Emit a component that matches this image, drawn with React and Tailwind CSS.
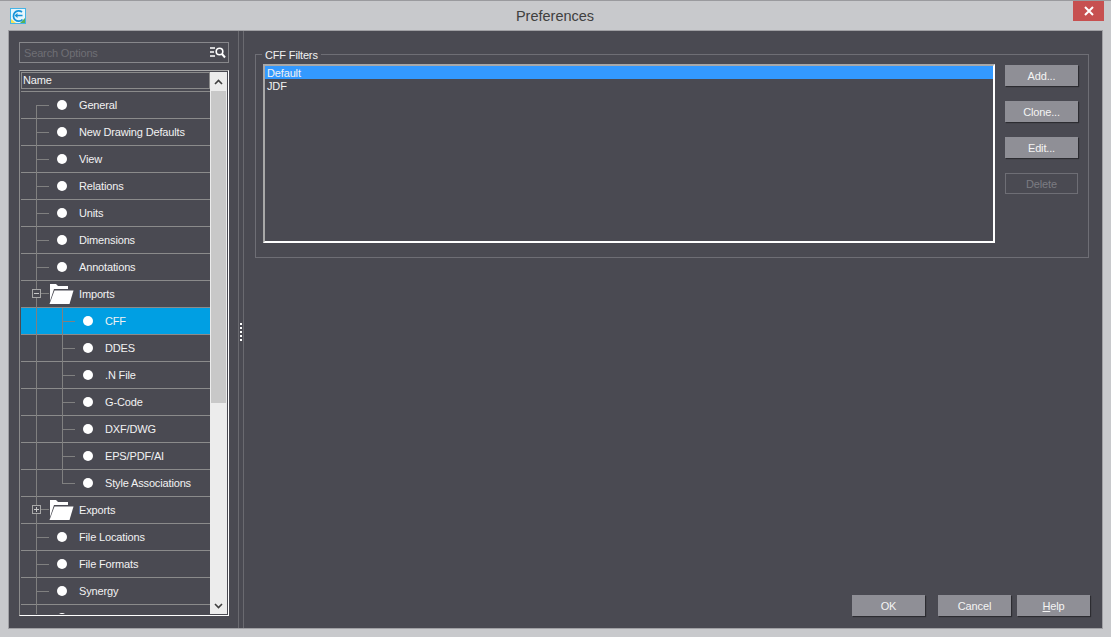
import { useState } from 'react'

const rows = [
  { label: 'General', first: true },
  { label: 'New Drawing Defaults' },
  { label: 'View' },
  { label: 'Relations' },
  { label: 'Units' },
  { label: 'Dimensions' },
  { label: 'Annotations' },
  { label: 'Imports', folder: 'open' },
  { label: 'CFF', child: true, selected: true },
  { label: 'DDES', child: true },
  { label: '.N File', child: true },
  { label: 'G-Code', child: true },
  { label: 'DXF/DWG', child: true },
  { label: 'EPS/PDF/AI', child: true },
  { label: 'Style Associations', child: true, lastChild: true },
  { label: 'Exports', folder: 'closed' },
  { label: 'File Locations' },
  { label: 'File Formats' },
  { label: 'Synergy' },
  { label: 'Sequence/ Macros' },
]

function AppIcon() {
  return (
    <svg width="16" height="16" viewBox="0 0 16 16" className="block">
      <rect x="0.5" y="0.5" width="15" height="15" fill="#e6f6fd" stroke="#45b4e6" />
      <path d="M1 11v4h5z" fill="#f2e35a" />
      <path d="M15 10v5h-5z" fill="#58b05a" />
      <path d="M12 4A5.2 5.2 0 1 0 12.5 11.5" fill="none" stroke="#1593d8" strokeWidth="1.7" />
      <path d="M7 7.5h5.5" stroke="#1593d8" strokeWidth="1.5" />
      <path d="M4.5 7.5l3-2.5v5z" fill="#1593d8" />
    </svg>
  )
}

function FolderIcon() {
  return (
    <svg width="25" height="21" viewBox="0 0 25 21" className="block">
      <path d="M1 18V1h6l2 2h10v3H5z" fill="#fff" />
      <path d="M5.5 7.5H24.5L20.5 21H0.5z" fill="#fff" />
    </svg>
  )
}

function ExpandBox({ open }) {
  return (
    <div className="absolute left-[11px] top-[8px] w-[9px] h-[9px] border border-[#a8a8a8] bg-[#4a4a52] flex items-center justify-center">
      <div className="relative w-[5px] h-px bg-[#c8c8c8]">
        {!open && <div className="absolute left-[2px] top-[-2px] w-px h-[5px] bg-[#c8c8c8]" />}
      </div>
    </div>
  )
}

function TreeRow({ row }) {
  return (
    <div className={`relative h-[27px] shrink-0 border-b border-[#8b8b8b] ${row.selected ? 'bg-[#009fe3]' : ''}`}>
      {/* tree connectors */}
      <div className={`absolute left-[15px] w-px bg-[#808080] ${row.first ? 'top-[13px] h-[14px]' : 'top-0 h-[27px]'}`} />
      {row.child && (
        <>
          <div className={`absolute left-[41px] top-0 w-px bg-[#808080] ${row.lastChild ? 'h-[13px]' : 'h-[27px]'}`} />
          <div className="absolute left-[41px] top-[13px] w-[13px] h-px bg-[#808080]" />
        </>
      )}
      {!row.child && !row.folder && <div className="absolute left-[15px] top-[13px] w-[13px] h-px bg-[#808080]" />}
      {row.folder && <div className="absolute left-[20px] top-[12px] w-[8px] h-px bg-[#808080]" />}
      {row.folder && <ExpandBox open={row.folder === 'open'} />}
      {row.folder ? (
        <div className="absolute left-[28px] top-[2px]"><FolderIcon /></div>
      ) : (
        <div className={`absolute top-[8px] w-[10px] h-[10px] rounded-full bg-white ${row.child ? 'left-[62px]' : 'left-[36px]'}`} />
      )}
      <div className={`flex items-center h-full text-[11px] tracking-[-0.15px] text-[#f2f2f2] whitespace-nowrap ${row.child ? 'pl-[84px]' : 'pl-[58px]'}`}>
        {row.label}
      </div>
    </div>
  )
}

function Scrollbar() {
  return (
    <div className="w-[17px] shrink-0 bg-[#ececec] flex flex-col">
      <div className="h-[19px] flex items-center justify-center text-[#404040] shrink-0">
        <svg width="9" height="6" viewBox="0 0 9 6"><path d="M1 5l3.5-3.5L8 5" fill="none" stroke="currentColor" strokeWidth="1.6" /></svg>
      </div>
      <div className="h-[312px] mx-px bg-[#c8c8c8] shrink-0" />
      <div className="flex-1" />
      <div className="h-[17px] flex items-center justify-center text-[#404040] shrink-0">
        <svg width="9" height="6" viewBox="0 0 9 6"><path d="M1 1l3.5 3.5L8 1" fill="none" stroke="currentColor" strokeWidth="1.6" /></svg>
      </div>
    </div>
  )
}

function Button({ children, disabled }) {
  if (disabled) {
    return (
      <button className="w-[73px] h-[21px] pt-px border border-[#6e6e75] text-[11px] tracking-[-0.15px] text-[#7c7c82]">{children}</button>
    )
  }
  return (
    <button className="w-[73px] h-[21px] pt-px bg-[#8f8f96] text-[11px] tracking-[-0.15px] text-[#f4f4f4] shadow-[1px_1px_1px_rgba(0,0,0,0.4)]">{children}</button>
  )
}

export default function App() {
  const [selected] = useState(0)
  const filters = ['Default', 'JDF']

  return (
    <div className="w-[1111px] h-[637px] flex flex-col bg-[#c8c9cc] border-t border-[#9a9a9e] overflow-hidden font-['Liberation_Sans',Arial,sans-serif]">
      {/* title bar */}
      <div className="h-[29px] shrink-0 flex items-start relative">
        <div className="pl-[10px] pt-[7px]"><AppIcon /></div>
        <div className="flex-1 text-center pt-[6px] pl-[11px] text-[14.5px] leading-[18px] text-[#404040]">Preferences</div>
        <div className="w-[31px] h-[20px] mr-[7px] mt-0 bg-[#c75050] flex items-center justify-center">
          <svg width="10" height="10" viewBox="0 0 10 10"><path d="M1 1l8 8M9 1l-8 8" stroke="#fff" strokeWidth="2" /></svg>
        </div>
      </div>

      {/* body */}
      <div className="flex-1 mx-[8px] mb-[8px] bg-[#4a4a52] border border-[#a0a0a4] flex min-h-0">
        {/* left pane */}
        <div className="w-[221px] shrink-0 pl-[10px] pt-[11px] pb-[12px] flex flex-col">
          <div className="h-[21px] w-[210px] shrink-0 border border-[#87878b] flex items-center justify-between pl-[4px] pr-[2px]">
            <span className="pt-px text-[11px] tracking-[-0.15px] text-[#6f6f75]">Search Options</span>
            <svg width="16" height="13" viewBox="0 0 16 13">
              <path d="M0 2h5M0 6h4M0 10h5" stroke="#fff" strokeWidth="1.4" />
              <circle cx="9.5" cy="5.5" r="3.3" fill="none" stroke="#fff" strokeWidth="1.6" />
              <path d="M12 8l3 3.5" stroke="#fff" strokeWidth="2" />
            </svg>
          </div>
          <div className="mt-[7px] w-[210px] flex-1 min-h-0 flex border-t border-r border-b border-t-[#a8a8a8] border-r-white border-b-white border-l border-l-[#8b8b8b] pl-px pr-px pb-px pt-px">
            <div className="flex-1 min-w-0 flex flex-col overflow-hidden">
              <div className="h-[17px] shrink-0 border border-[#8b8b8b] text-[11px] tracking-[-0.15px] leading-[15px] pl-px text-[#f2f2f2]">Name</div>
              <div className="h-[2px] shrink-0 border-b border-[#8b8b8b] box-content" />
              {rows.map((row) => <TreeRow key={row.label} row={row} />)}
            </div>
            <Scrollbar />
          </div>
        </div>

        {/* splitter */}
        <div className="w-[6px] shrink-0 ml-[8px] border-l border-r border-[#6a6a70] flex flex-col items-center justify-center gap-[2px] pt-[4px]">
          {[0, 1, 2, 3, 4].map((i) => <div key={i} className="w-[2px] h-[2px] bg-white" />)}
        </div>

        {/* right pane */}
        <div className="flex-1 min-w-0 flex flex-col pl-[11px] pr-[13px] pt-[23px] pb-[12px]">
          <div className="relative h-[204px] border border-[#6e6e75] flex pl-[7px] pt-[9px] pr-[10px]">
            <div className="absolute left-[6px] -top-[7px] px-[3px] bg-[#4a4a52] text-[11px] tracking-[-0.15px] leading-[14px] text-[#f2f2f2]">CFF Filters</div>
            <div className="w-[732px] h-[179px] shrink-0 border-2 border-white border-t-[#a8a8a8] border-l-[#a8a8a8] text-[11px] tracking-[-0.15px] leading-[14px] text-[#f2f2f2]">
              {filters.map((f, i) => (
                <div key={f} className={`h-[13px] pl-[2px] ${i === selected ? 'bg-[#3399ff]' : ''}`}>{f}</div>
              ))}
            </div>
            <div className="ml-[10px] flex flex-col gap-[15px] pt-px">
              <Button>Add...</Button>
              <Button>Clone...</Button>
              <Button>Edit...</Button>
              <Button disabled>Delete</Button>
            </div>
          </div>
          <div className="flex-1" />
          <div className="flex justify-end items-center -mr-px">
            <Button>OK</Button>
            <div className="w-[13px]" />
            <Button>Cancel</Button>
            <div className="w-[6px]" />
            <Button><span className="underline">H</span>elp</Button>
          </div>
        </div>
      </div>
    </div>
  )
}
